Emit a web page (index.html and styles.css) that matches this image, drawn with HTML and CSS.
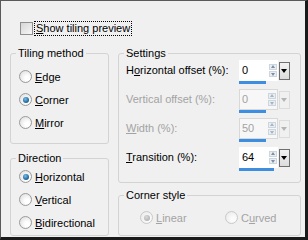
FILE: index.html
```html
<!DOCTYPE html>
<html lang="en">

<head>
    <meta charset="UTF-8">
    <title>Tiling Options</title>
    <link rel="stylesheet" href="styles.css">
</head>

<body>
    <div class="dialog">
        <div class="preview">
            <span class="checkbox"></span>
            <span class="focus"><u>S</u>how tiling preview</span>
        </div>

        <div class="columns">
            <div class="col col-left">
                <fieldset class="group tiling">
                    <legend>Tiling method</legend>
                    <div class="radio-row"><span class="radio"></span><span><u>E</u>dge</span></div>
                    <div class="radio-row"><span class="radio checked"></span><span><u>C</u>orner</span></div>
                    <div class="radio-row"><span class="radio"></span><span><u>M</u>irror</span></div>
                </fieldset>

                <fieldset class="group direction">
                    <legend>Direction</legend>
                    <div class="radio-row"><span class="radio checked"></span><span><u>H</u>orizontal</span></div>
                    <div class="radio-row"><span class="radio"></span><span><u>V</u>ertical</span></div>
                    <div class="radio-row"><span class="radio"></span><span><u>B</u>idirectional</span></div>
                </fieldset>
            </div>

            <div class="col col-right">
                <fieldset class="group settings">
                    <legend>Settings</legend>

                    <div class="field">
                        <span class="field-label">H<u>o</u>rizontal offset (%):</span>
                        <div class="spin">
                            <div class="spin-box">
                                <span class="spin-value">0</span>
                                <span class="arrows"><span class="arrow up"></span><span class="arrow down"></span></span>
                            </div>
                            <div class="spin-bar" style="width: 27px"></div>
                        </div>
                        <span class="drop"></span>
                    </div>

                    <div class="field disabled">
                        <span class="field-label">Vertical offset (%):</span>
                        <div class="spin">
                            <div class="spin-box">
                                <span class="spin-value">0</span>
                                <span class="arrows"><span class="arrow up"></span><span class="arrow down"></span></span>
                            </div>
                            <div class="spin-bar" style="width: 27px"></div>
                        </div>
                        <span class="drop"></span>
                    </div>

                    <div class="field disabled">
                        <span class="field-label"><u>W</u>idth (%):</span>
                        <div class="spin">
                            <div class="spin-box">
                                <span class="spin-value">50</span>
                                <span class="arrows"><span class="arrow up"></span><span class="arrow down"></span></span>
                            </div>
                            <div class="spin-bar" style="width: 27px"></div>
                        </div>
                        <span class="drop"></span>
                    </div>

                    <div class="field">
                        <span class="field-label"><u>T</u>ransition (%):</span>
                        <div class="spin">
                            <div class="spin-box">
                                <span class="spin-value">64</span>
                                <span class="arrows"><span class="arrow up"></span><span class="arrow down"></span></span>
                            </div>
                            <div class="spin-bar" style="width: 35px"></div>
                        </div>
                        <span class="drop"></span>
                    </div>
                </fieldset>

                <fieldset class="group corner">
                    <legend>Corner style</legend>
                    <div class="corner-row">
                        <div class="radio-row linear"><span class="radio checked"></span><span><u>L</u>inear</span></div>
                        <div class="radio-row"><span class="radio"></span><span>C<u>u</u>rved</span></div>
                    </div>
                </fieldset>
            </div>
        </div>
    </div>
</body>

</html>
```

FILE: styles.css
```css
html, body {
    margin: 0;
    padding: 0;
}

body {
    font-family: "Liberation Sans", Arial, sans-serif;
    font-size: 11px;
    color: #000;
    background-color: #f0f0f0;
}

.dialog {
    width: 308px;
    height: 240px;
    box-sizing: border-box;
    border-style: solid;
    border-width: 1px 3px 3px 1px;
    border-color: #5a5a5a #1a1a1a #1a1a1a #5a5a5a;
    padding: 20px 4px 0 9px;
    background-color: #f0f0f0;
}

/* Top checkbox */
.preview {
    display: flex;
    align-items: center;
    height: 15px;
    padding-left: 10px;
}

.checkbox {
    width: 13px;
    height: 13px;
    box-sizing: border-box;
    border: 1px solid #8f8f8f;
    background: linear-gradient(135deg, #d6d6d6, #f7f7f7);
}

.focus {
    margin-left: 1px;
    padding: 0 1px 0 1px;
    line-height: 13px;
    border: 1px dotted #000;
}

u {
    text-decoration: underline;
    text-underline-offset: 1px;
}

/* Columns */
.columns {
    display: flex;
    gap: 9px;
    margin-top: 11px;
}

.col {
    display: flex;
    flex-direction: column;
}

.col-left {
    width: 99px;
    gap: 8px;
}

.col-right {
    width: 183px;
    gap: 6px;
}

.group {
    margin: 0;
    box-sizing: border-box;
    border: 1px solid #d3d3d3;
    border-radius: 3px;
    padding: 0 5px;
    min-width: 0;
}

.group legend {
    padding: 0 2px;
    line-height: 13px;
}

.tiling {
    height: 97px;
    padding-top: 5px;
}

.direction {
    height: 84px;
}

.settings {
    height: 136px;
    padding-right: 10px;
}

.corner {
    height: 47px;
    padding-top: 4px;
}

/* Radio buttons */
.radio-row {
    display: flex;
    align-items: center;
    height: 23px;
    padding-left: 3px;
}

.radio {
    position: relative;
    width: 13px;
    height: 13px;
    box-sizing: border-box;
    margin-right: 3px;
    border: 1px solid #9a9a9a;
    border-radius: 50%;
    background: radial-gradient(circle at 65% 65%, #ffffff 20%, #d9d9d9 100%);
}

.radio.checked::after {
    content: "";
    position: absolute;
    left: 2.5px;
    top: 2.5px;
    width: 6px;
    height: 6px;
    border-radius: 50%;
    background: radial-gradient(circle at 40% 35%, #7cc0e6 0%, #2a72a8 55%, #154a75 100%);
}

.corner-row {
    display: flex;
    padding-left: 13px;
    color: #a3a3a3;
}

.corner-row .radio {
    border-color: #c9c9c9;
    background: radial-gradient(circle at 65% 65%, #fbfbfb 20%, #e6e6e6 100%);
}

.corner-row .radio.checked::after {
    background: radial-gradient(circle at 40% 35%, #dadada 0%, #b4b4b4 70%);
}

.linear {
    width: 82px;
}

/* Settings rows */
.field {
    display: flex;
    align-items: flex-start;
    height: 29px;
}

.field-label {
    flex: 1;
    padding-left: 2px;
    line-height: 21px;
}

.spin {
    width: 39px;
}

.spin-box {
    display: flex;
    align-items: center;
    justify-content: space-between;
    height: 21px;
    box-sizing: border-box;
    padding: 0 1px 0 3px;
    background-color: #fff;
}

.spin-value {
    line-height: 21px;
}

.arrows {
    display: flex;
    flex-direction: column;
    gap: 1px;
}

.arrow {
    position: relative;
    width: 8px;
    height: 6px;
    box-sizing: border-box;
    border: 1px solid #cdd6df;
    background-color: #e9eef3;
}

.arrow::after {
    content: "";
    position: absolute;
    left: 1px;
    border-left: 2px solid transparent;
    border-right: 2px solid transparent;
}

.arrow.up::after {
    top: 0;
    border-bottom: 3px solid #7d8fa3;
}

.arrow.down::after {
    top: 1px;
    border-top: 3px solid #7d8fa3;
}

.spin-bar {
    height: 3px;
    background-color: #3d8de0;
}

.drop {
    position: relative;
    width: 11px;
    height: 18px;
    box-sizing: border-box;
    margin: 2px 0 0 1px;
    border: 1px solid #6f6f6f;
    background: linear-gradient(#f2f2f2, #dcdcdc);
}

.drop::after {
    content: "";
    position: absolute;
    left: 1px;
    top: 6px;
    border-left: 3.5px solid transparent;
    border-right: 3.5px solid transparent;
    border-top: 4px solid #000;
}

.field.disabled .field-label,
.field.disabled .spin-value {
    color: #a3a3a3;
}

.field.disabled .spin-box {
    border: 1px solid #d8d8d8;
    background-color: #f7f7f7;
    padding-left: 2px;
}

.field.disabled .arrow::after {
    opacity: 0.6;
}

.field.disabled .drop {
    border-color: #dcdcdc;
    background: #f0f0f0;
}

.field.disabled .drop::after {
    border-top-color: #b4b4b4;
}
```
